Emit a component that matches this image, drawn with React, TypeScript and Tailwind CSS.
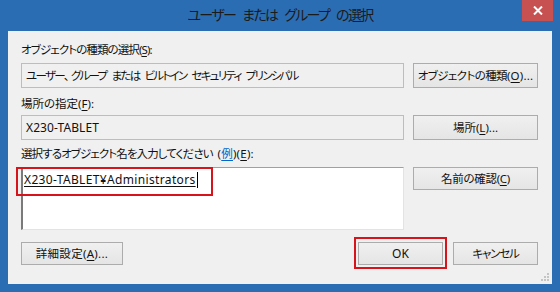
import React from "react";

const font =
  'font-["Noto_Sans","Noto_Sans_CJK_JP",sans-serif] [font-feature-settings:"palt"_1]';

function Btn({
  children,
  className = "",
}: {
  children: React.ReactNode;
  className?: string;
}) {
  return (
    <div
      className={
        "flex items-center justify-center whitespace-nowrap border border-[#acacac] bg-gradient-to-b from-[#f0f0f0] to-[#e5e5e5] text-[11.5px] text-[#111111] " +
        className
      }
    >
      {children}
    </div>
  );
}

function U({ c }: { c: string }) {
  return <span className="underline underline-offset-2">{c}</span>;
}

function Sp() {
  return <span className="inline-block w-[5px]"> </span>;
}

function TSp() {
  return <span className="inline-block w-[7px]"> </span>;
}

export default function App() {
  return (
    <div
      className={
        "w-[560px] h-[292px] bg-[#2b6db3] flex flex-col overflow-hidden " + font
      }
    >
      {/* Title bar */}
      <div className="relative h-[31px] shrink-0 flex items-start justify-center">
        <div className="mt-[4px] text-[14px] leading-[22px] text-[#1b1b1b] tracking-[-1.7px] whitespace-nowrap">
          ユーザー<TSp />または<TSp />グループ<TSp />の選択
        </div>
        <div className="absolute right-[7px] top-0 w-[31px] h-[21px] bg-[#c75050] flex items-center justify-center">
          <svg width="10" height="9" viewBox="0 0 10 9">
            <path
              d="M1 0.5 L9 8.5 M9 0.5 L1 8.5"
              stroke="#ffffff"
              strokeWidth="2"
            />
          </svg>
        </div>
      </div>

      {/* Client area */}
      <div className="relative mx-[8px] mb-[8px] flex-1 bg-[#f0f0f0] pl-[13px] pr-[14px] pt-[11px] flex flex-col text-[11.5px] text-[#111111]">
        <div className="h-[16px] leading-[16px] whitespace-nowrap tracking-[-0.9px]">
          オブジェクトの種類の選択(<U c="S" />):
        </div>
        <div className="mt-[5px] flex gap-[9px]">
          <div className="w-[383px] h-[25px] border border-[#bdbdbd] bg-[#f0f0f0] flex items-center pl-[4px] whitespace-nowrap tracking-[-1.7px]">
            <span>
              ユーザー<span className="mr-[3px]">、</span>グループ<Sp />または<Sp />ビルトイン<Sp />セキュリティ<Sp />プリンシパル
            </span>
          </div>
          <Btn className="w-[125px] h-[25px] tracking-[-0.6px]">
            オブジェクトの種類
            <span className="tracking-[0.2px]">
              (<U c="O" />)...
            </span>
          </Btn>
        </div>

        <div className="mt-[8px] h-[16px] leading-[16px] whitespace-nowrap">
          場所の指定(<U c="F" />):
        </div>
        <div className="mt-[3px] flex gap-[9px]">
          <div className="w-[383px] h-[25px] border border-[#bdbdbd] bg-[#f0f0f0] flex items-center pl-[4px] text-[12px] tracking-[0.1px]">
            X230-TABLET
          </div>
          <Btn className="w-[125px] h-[25px]">
            場所(<U c="L" />)...
          </Btn>
        </div>

        <div className="mt-[6px] h-[16px] leading-[16px] whitespace-nowrap tracking-[-0.9px]">
          選択するオブジェクト名を入力してください<Sp />
          <span className="tracking-[0.2px]">
            (
            <span className="text-[#0066cc] underline underline-offset-2">例</span>
            )(<U c="E" />):
          </span>
        </div>
        <div className="mt-[5px] flex gap-[9px] items-start">
          <div className="relative w-[383px] h-[63px] bg-white border-t border-t-[#a0a0a0] border-l-2 border-l-[#7a7a7a] border-r border-r-[#e3e3e3] border-b border-b-[#e3e3e3] pl-[1px] pt-[4px]">
            <div className="flex items-center h-[16px] leading-[16px] text-[12px] tracking-[0.35px]">
              <span className="underline underline-offset-2">
                X230-TABLET¥Administrators
              </span>
              <span className="ml-[1px] w-[1px] h-[16px] bg-black" />
            </div>
            <div className="absolute left-[-7px] top-[-1px] w-[197px] h-[29px] border-2 border-[#d7141a]" />
          </div>
          <Btn className="w-[125px] h-[23px] tracking-[-0.3px]">
            名前の確認(<U c="C" />)
          </Btn>
        </div>

        <div className="mt-[12px] flex items-start">
          <Btn className="w-[102px] h-[23px] tracking-[0.3px]">
            詳細設定(<U c="A" />)...
          </Btn>
          <div className="flex-1" />
          <div className="relative">
            <Btn className="w-[85px] h-[23px] text-[12px]">OK</Btn>
            <div className="absolute left-[-4px] top-[-5px] w-[93px] h-[32px] border-2 border-[#d7141a]" />
          </div>
          <Btn className="ml-[10px] w-[85px] h-[23px] tracking-[-1.2px]">
            キャンセル
          </Btn>
        </div>

        <svg
          className="absolute right-[2px] bottom-[2px]"
          width="9"
          height="9"
          viewBox="0 0 9 9"
        >
          <rect x="6" y="0" width="2" height="2" fill="#c4c4c4" />
          <rect x="3" y="3" width="2" height="2" fill="#c4c4c4" />
          <rect x="6" y="3" width="2" height="2" fill="#c4c4c4" />
          <rect x="0" y="6" width="2" height="2" fill="#c4c4c4" />
          <rect x="3" y="6" width="2" height="2" fill="#c4c4c4" />
          <rect x="6" y="6" width="2" height="2" fill="#c4c4c4" />
        </svg>
      </div>
    </div>
  );
}
